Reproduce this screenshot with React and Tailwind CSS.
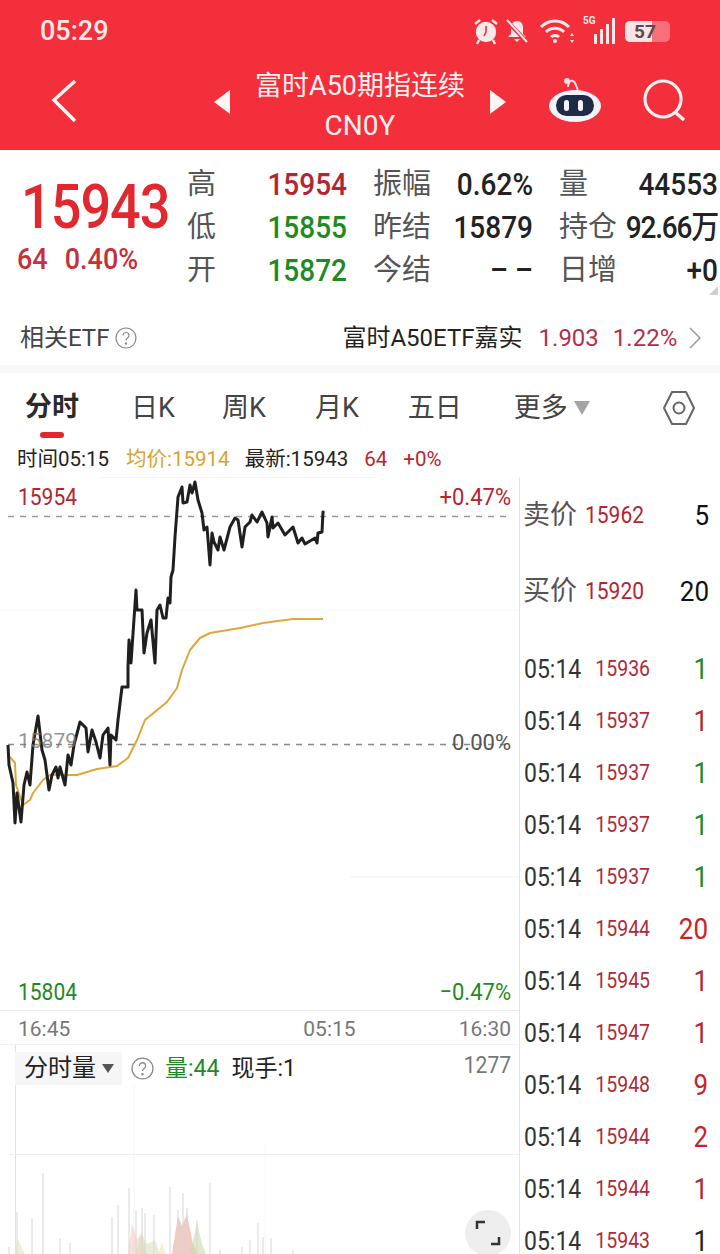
import React from "react";

const RED = "text-[#b3262f]";
const GREEN = "text-[#1f8a24]";

const pricePts =
  "8,745 9,765 13,783 15,823 17,793 21,822 24,785 27,772 30,785 33,745 38,716 42,750 45,760 49,790 52,775 56,767 58,778 60,767 65,785 68,755 71,765 74,745 80,722 86,728 88,752 92,730 96,742 100,758 103,735 108,728 110,765 111,735 116,740 118,720 122,687 128,687 128,667 129,640 131,663 136,590 137,610 142,610 144,653 147,633 151,620 155,663 157,610 160,605 163,618 166,618 168,598 170,603 171,577 173,570 175,537 178,497 182,487 183,503 187,502 190,485 192,493 195,482 198,500 202,513 204,530 207,527 210,565 212,533 214,542 218,550 220,537 224,550 230,527 235,518 238,520 242,547 245,527 250,522 252,515 257,522 262,512 267,523 268,537 272,517 273,528 278,523 285,535 293,527 298,543 302,538 305,544 315,538 317,543 318,533 322,532 323,512 324,513";
const avgPts =
  "10,757 15,763 16,785 23,805 30,800 33,793 43,780 50,775 77,775 97,769 117,766 128,758 137,740 145,720 167,702 177,688 182,670 190,650 200,638 210,633 240,628 263,623 293,619 323,619";

function offsetPts(pts, dy) {
  return pts
    .split(" ")
    .map((p) => {
      const [x, y] = p.split(",").map(Number);
      return `${x},${y - dy}`;
    })
    .join(" ");
}

const volBars = [
  [9, 1247], [17, 1212], [32, 1218], [43, 1173], [60, 1238], [70, 1243], [112, 1217], [118, 1205],
  [129, 1188], [136, 1210], [142, 1208], [145, 1213], [154, 1215], [170, 1187], [178, 1210], [183, 1193],
  [187, 1208], [197, 1220], [210, 1183], [220, 1250], [242, 1247], [250, 1240], [258, 1223], [263, 1237],
  [271, 1238], [293, 1250],
];

const ticks = [
  ["15936", "1", GREEN],
  ["15937", "1", RED],
  ["15937", "1", GREEN],
  ["15937", "1", GREEN],
  ["15937", "1", GREEN],
  ["15944", "20", "text-[#c8232b]"],
  ["15945", "1", RED],
  ["15947", "1", RED],
  ["15948", "9", "text-[#c8232b]"],
  ["15944", "2", "text-[#c8232b]"],
  ["15944", "1", RED],
  ["15943", "1", "text-[#222]"],
];

const tabs = [
  ["日K", "ml-[52px]"],
  ["周K", "ml-[47px]"],
  ["月K", "ml-[49px]"],
  ["五日", "ml-[49px]"],
  ["更多", "ml-[52px]"],
];

function StatusIcons() {
  return (
    <div className="flex items-center ml-auto mr-[50px] gap-[10px]">
      <svg width="26" height="28" viewBox="0 0 26 28" fill="none" stroke="#fbe9ea" strokeWidth="2.4" className="mr-[-7px]">
        <circle cx="13" cy="15" r="9" fill="#fbe9ea" />
        <path d="M13 9v6l-2 4" stroke="#f22f3a" strokeWidth="1.6" />
        <path d="M2 7l5-4M24 7l-5-4M6 23l-2 4M20 23l2 4" />
      </svg>
      <svg width="26" height="26" viewBox="0 0 26 26" fill="#fbe9ea" className="ml-[2px] mr-[-2px]">
        <path d="M13 3c-4 0-6 3-6 7v6l-3 3h18l-3-3v-6c0-4-2-7-6-7z" />
        <path d="M10 21h6l-3 3z" />
        <path d="M3 3l20 21" stroke="#f22f3a" strokeWidth="4" />
        <path d="M3 2l20 22" stroke="#fbe9ea" strokeWidth="2" />
      </svg>
      <svg width="36" height="26" viewBox="0 0 36 26" fill="none" stroke="#fbe9ea" strokeWidth="3" className="ml-[1px]">
        <path d="M2 9c8-8 20-8 28 0M7 14c5-5 13-5 18 0M12 19c2-2 6-2 8 0" />
        <circle cx="16" cy="23" r="2" fill="#fbe9ea" stroke="none" />
        <path d="M33 15l2 3h-4zM33 25l2-3h-4z" fill="#fbe9ea" stroke="none" />
      </svg>
      <div className="relative w-[32px] h-[26px] ml-[-2px]">
        <span className="absolute left-0 top-[-2px] text-[10px] leading-none font-bold text-[#fbe9ea]">5G</span>
        <div className="absolute inset-0 flex items-end justify-end gap-[3px]">
          <div className="w-[3px] h-[10px] bg-[#fbe9ea]" />
          <div className="w-[3px] h-[15px] bg-[#fbe9ea]" />
          <div className="w-[3px] h-[20px] bg-[#fbe9ea]" />
          <div className="w-[3px] h-[26px] bg-[#fbe9ea]" />
        </div>
      </div>
      <div className="relative h-[21px] w-[45px] rounded-[5px] overflow-hidden bg-[#f97078]">
        <div className="w-[27px] h-full bg-[#fbe3e5]" />
        <span className="absolute left-[9px] top-[1px] text-[19px] font-bold leading-[19px] text-[#5a4a4c]">57</span>
      </div>
    </div>
  );
}

function Header() {
  return (
    <div className="h-[150px] bg-[#f22f3a] text-white flex flex-col shrink-0">
      <div className="h-[62px] flex items-center pl-[40px]">
        <span className="text-[27px] font-medium text-[#fbe9ea] leading-none">05:29</span>
        <StatusIcons />
      </div>
      <div className="flex-1 flex items-start relative">
        <svg width="30" height="44" viewBox="0 0 30 44" fill="none" stroke="#fdf1f1" strokeWidth="3.5" className="ml-[49px] mt-[17px]">
          <path d="M26 2L5 21l21 21" />
        </svg>
        <svg width="18" height="24" viewBox="0 0 18 24" fill="#fdf4f4" className="ml-[135px] mt-[28px]">
          <path d="M16 0v24L0 12z" />
        </svg>
        <div className="w-[256px] flex flex-col items-center text-[#fdf1f1]">
          <span className="text-[27px] leading-[36px] mt-[6px] whitespace-nowrap">富时A50期指连续</span>
          <span className="text-[28px] leading-[36px] mt-[4px]">CN0Y</span>
        </div>
        <svg width="18" height="24" viewBox="0 0 18 24" fill="#fdf4f4" className="mt-[28px]">
          <path d="M2 0v24L18 12z" />
        </svg>
        <svg width="54" height="48" viewBox="0 0 54 48" className="ml-[42px] mt-[13px]">
          <path d="M20 12c0-4 2-7 5-6s3 6 5 9" fill="none" stroke="#f8dfe0" strokeWidth="2" />
          <circle cx="19" cy="6" r="3" fill="#f8dfe0" />
          <ellipse cx="27" cy="31" rx="26" ry="16" fill="#f3f1fb" />
          <rect x="8" y="20" width="38" height="21" rx="10.5" fill="#1f2a47" />
          <rect x="16" y="25" width="5" height="11" rx="2.5" fill="#f2f4fa" />
          <rect x="30" y="25" width="5" height="11" rx="2.5" fill="#f2f4fa" />
        </svg>
        <svg width="44" height="44" viewBox="0 0 44 44" fill="none" stroke="#fdf1f1" strokeWidth="3.2" className="ml-[41px] mt-[17px]">
          <circle cx="20" cy="20" r="18" />
          <path d="M32 33l9 8" />
        </svg>
      </div>
    </div>
  );
}

function Cell({ label, value, cls }) {
  return (
    <div className="flex items-center justify-between h-[43px]">
      <span className="text-[29px] text-[#555] whitespace-nowrap leading-none">{label}</span>
      <span className={`text-[28px] leading-none font-medium whitespace-nowrap scale-y-[1.12] ${cls}`}>{value}</span>
    </div>
  );
}

function Quote() {
  const rows = [
    ["高", "15954", RED, "振幅", "0.62%", "量", "44553", "text-[#222]"],
    ["低", "15855", GREEN, "昨结", "15879", "持仓", "92.66万", "text-[#222] tracking-[-1.2px]"],
    ["开", "15872", GREEN, "今结", "– –", "日增", "+0", "text-[#222]"],
  ];
  return (
    <div className="flex h-[155px] shrink-0 relative">
      <div className="w-[187px] shrink-0 pl-[17px]">
        <div className="text-[54px] leading-none font-medium text-[#e0282e] mt-[30px] ml-[4px] tracking-[-1px] scale-y-[1.14] origin-center w-fit">15943</div>
        <div className="flex gap-[17px] text-[27px] leading-none font-medium text-[#c5303a] mt-[12px] scale-y-[1.08] origin-center">
          <span>64</span>
          <span>0.40%</span>
        </div>
      </div>
      <div className="flex-1 pt-[13px]">
        {rows.map((r) => (
          <div key={r[0]} className="grid grid-cols-[160px_160px_159px] gap-x-[26px] w-[531px]">
            <Cell label={r[0]} value={r[1]} cls={r[2]} />
            <Cell label={r[3]} value={r[4]} cls="text-[#222]" />
            <Cell label={r[5]} value={r[6]} cls={r[7]} />
          </div>
        ))}
      </div>
      <svg width="9" height="9" viewBox="0 0 9 9" fill="#cfcfcf" className="absolute right-[2px] bottom-[10px]">
        <path d="M9 0v9H0z" />
      </svg>
    </div>
  );
}

function Help({ size = 22 }) {
  return (
    <svg width={size} height={size} viewBox="0 0 22 22" fill="none" stroke="#8a8a8a" strokeWidth="1.2">
      <circle cx="11" cy="11" r="10" />
      <path d="M8 8.5c0-4 6-4 6 0 0 2.500-3 2.500-3 5" />
      <circle cx="11" cy="16.500" r="0.6" fill="#8a8a8a" />
    </svg>
  );
}

function Etf() {
  return (
    <div className="h-[68px] flex items-center pl-[20px] pt-[6px] text-[24px] shrink-0 border-b-[8px] border-[#f8f8f8]">
      <span className="text-[#444] leading-none whitespace-nowrap">相关ETF</span>
      <span className="ml-[6px] flex"><Help /></span>
      <span className="ml-[205px] text-[#222] leading-none whitespace-nowrap">富时A50ETF嘉实</span>
      <span className="ml-[16px] text-[#b3304a] leading-none">1.903</span>
      <span className="ml-[14px] text-[#b3304a] leading-none">1.22%</span>
      <svg width="12" height="22" viewBox="0 0 12 22" fill="none" stroke="#9a9a9a" strokeWidth="1.5" className="ml-[12px]">
        <path d="M1 1l10 10L1 21" />
      </svg>
    </div>
  );
}

function Tabs() {
  return (
    <div className="h-[64px] flex items-center pl-[25px] pt-[6px] shrink-0 relative">
      <div className="relative">
        <span className="text-[27px] font-bold text-[#2a2a2a] leading-none">分时</span>
        <div className="absolute left-[15px] top-[38px] w-[24px] h-[6px] rounded-full bg-[#e0282e]" />
      </div>
      {tabs.map(([t, m]) => (
        <span key={t} className={`text-[27px] text-[#444] leading-none ${m}`}>{t}</span>
      ))}
      <svg width="16" height="14" viewBox="0 0 16 14" fill="#a4a4a4" className="ml-[6px]">
        <path d="M0 0h16L8 14z" />
      </svg>
      <svg width="34" height="38" viewBox="0 0 34 38" fill="none" stroke="#666" strokeWidth="2" className="ml-[72px]">
        <path d="M10 3h14l8 16-8 16H10L2 19z" strokeLinejoin="round" />
        <circle cx="17" cy="19" r="5.500" />
      </svg>
    </div>
  );
}

function InfoRow() {
  return (
    <div className="h-[40px] flex items-start pt-[10px] pl-[17px] text-[20.5px] leading-[24px] shrink-0 whitespace-nowrap">
      <span className="text-[#222]">时间05:15</span>
      <span className="ml-[17px] text-[#d9a233]">均价:15914</span>
      <span className="ml-[15px] text-[#222]">最新:15943</span>
      <span className="ml-[16px] text-[#b3262f]">64</span>
      <span className="ml-[16px] text-[#b3262f]">+0%</span>
    </div>
  );
}

function Chart() {
  return (
    <div className="relative h-[534px] border-b border-[#ececec]">
      <svg width="520" height="534" className="absolute inset-0">
        <line x1="98" y1="0.500" x2="377" y2="0.500" stroke="#f5f5f5" />
        <line x1="0" y1="133" x2="519" y2="133" stroke="#f6f6f6" />
        <line x1="350" y1="400" x2="519" y2="400" stroke="#f3f3f3" />
        <line x1="8" y1="39.500" x2="512" y2="39.500" stroke="#999" strokeWidth="1.500" strokeDasharray="6 6" />
        <line x1="8" y1="267.500" x2="512" y2="267.500" stroke="#888" strokeWidth="1.500" strokeDasharray="6 6" />
        <polyline points={offsetPts(avgPts, 477)} fill="none" stroke="#dfa63a" strokeWidth="2" strokeLinejoin="round" />
        <polyline points={offsetPts(pricePts, 477)} fill="none" stroke="#1f1f1f" strokeWidth="3" strokeLinejoin="round" />
      </svg>
      <span className={`absolute left-[18px] top-[8px] text-[21px] leading-[24px] scale-y-[1.1] ${RED}`}>15954</span>
      <span className={`absolute right-[8px] top-[8px] text-[22px] leading-[24px] scale-y-[1.1] ${RED}`}>+0.47%</span>
      <span className="absolute left-[18px] top-[252px] text-[21px] leading-[24px] text-[#777]/80">15879</span>
      <span className="absolute right-[8px] top-[254px] text-[22px] leading-[24px] text-[#555]">0.00%</span>
      <span className={`absolute left-[18px] top-[503px] text-[21px] leading-[24px] scale-y-[1.1] ${GREEN}`}>15804</span>
      <span className={`absolute right-[8px] top-[503px] text-[22px] leading-[24px] scale-y-[1.1] ${GREEN}`}>−0.47%</span>
    </div>
  );
}

function Axis() {
  return (
    <div className="h-[34px] flex items-center pl-[18px] pr-[8px] pt-[3px] text-[21px] leading-none text-[#777] border-b border-[#f1f1f1]">
      <span>16:45</span>
      <span className="ml-[233px]">05:15</span>
      <span className="ml-auto">16:30</span>
    </div>
  );
}

function Volume() {
  return (
    <div className="relative flex-1">
      <svg width="520" height="209" className="absolute inset-0">
        <line x1="15.500" y1="0" x2="15.500" y2="209" stroke="#e2e2e2" />
        <line x1="134" y1="40" x2="134" y2="209" stroke="#f3f3f3" />
        <line x1="265" y1="100" x2="265" y2="209" stroke="#f6f6f6" />
        <line x1="8" y1="109.500" x2="519" y2="109.500" stroke="#efefef" />
        <path d="M128 209l4-30 5 15 5-5 5 20z" fill="#f2c9c0" opacity="0.55" />
        <path d="M136 209l5-22 6 12 8-4 5 14z" fill="#d5dfbc" opacity="0.55" />
        <path d="M172 209l6-38 4 10 5-12 6 30 4 10z" fill="#edb4a8" opacity="0.7" />
        <path d="M190 209l7-32 5 22 4 10z" fill="#c9d9ac" opacity="0.6" />
        <path d="M15 209l3-16 3 8 4 8z" fill="#e2e5c8" opacity="0.6" />
        <path d="M158 209l4-12 4 12z" fill="#ece6bd" opacity="0.6" />
        {volBars.map(([x, y]) => (
          <line key={x} x1={x} y1={y - 1045} x2={x} y2="209" stroke="#d6d6d6" strokeWidth="1" />
        ))}
      </svg>
      <div className="relative flex items-center h-[46px] pl-[15px] text-[23px] leading-none whitespace-nowrap">
        <div className="flex items-center w-[107px] h-[33px] bg-[#f6f6f6] pl-[9px]">
          <span className="text-[24px] text-[#222]">分时量</span>
          <svg width="12" height="9" viewBox="0 0 12 9" fill="#555" className="ml-[6px]">
            <path d="M0 0h12L6 9z" />
          </svg>
        </div>
        <span className="ml-[9px] flex"><Help size={23} /></span>
        <span className={`ml-[11px] ${GREEN}`}>量:44</span>
        <span className="ml-[12px] text-[#222]">现手:1</span>
      </div>
      <span className="absolute right-[8px] top-[8px] text-[21px] leading-[24px] scale-y-[1.1] text-[#777]">1277</span>
      <div className="absolute left-[465px] top-[165px] w-[46px] h-[46px] rounded-full bg-[#eeeeee] flex items-center justify-center">
        <svg width="26" height="26" viewBox="0 0 26 26" fill="none" stroke="#333" strokeWidth="2.500">
          <path d="M2 9V2h8M24 17v7h-8" />
        </svg>
      </div>
    </div>
  );
}

function BidAsk({ label, price, qty }) {
  return (
    <div className="h-[76px] flex items-center pl-[3px] pr-[11px]">
      <span className="text-[27px] text-[#555] leading-none whitespace-nowrap">{label}</span>
      <span className={`ml-[8px] text-[21px] leading-none scale-y-[1.12] ${RED}`}>{price}</span>
      <span className="ml-auto text-[26px] leading-none text-[#111] scale-y-[1.08]">{qty}</span>
    </div>
  );
}

function RightCol() {
  return (
    <div className="flex-1 border-l border-[#e6e6e6] overflow-hidden">
      <BidAsk label="卖价" price="15962" qty="5" />
      <BidAsk label="买价" price="15920" qty="20" />
      <div className="mt-[14px]">
        {ticks.map(([p, q, c], i) => (
          <div key={i} className="h-[52px] flex items-center pl-[4px] pr-[12px]">
            <span className="text-[23px] leading-none text-[#333] scale-y-[1.12]">05:14</span>
            <span className="ml-[14px] text-[19.5px] leading-none text-[#ad2c3a] scale-y-[1.12]">{p}</span>
            <span className={`ml-auto text-[26px] leading-none scale-y-[1.1] ${c}`}>{q}</span>
          </div>
        ))}
      </div>
    </div>
  );
}

export default function App() {
  return (
    <div className="w-[720px] h-[1254px] overflow-hidden bg-white flex flex-col font-[Roboto,'Noto_Sans_CJK_SC',sans-serif]">
      <Header />
      <Quote />
      <Etf />
      <Tabs />
      <InfoRow />
      <div className="flex flex-1 min-h-0">
        <div className="w-[519px] shrink-0 flex flex-col">
          <Chart />
          <Axis />
          <Volume />
        </div>
        <RightCol />
      </div>
    </div>
  );
}
